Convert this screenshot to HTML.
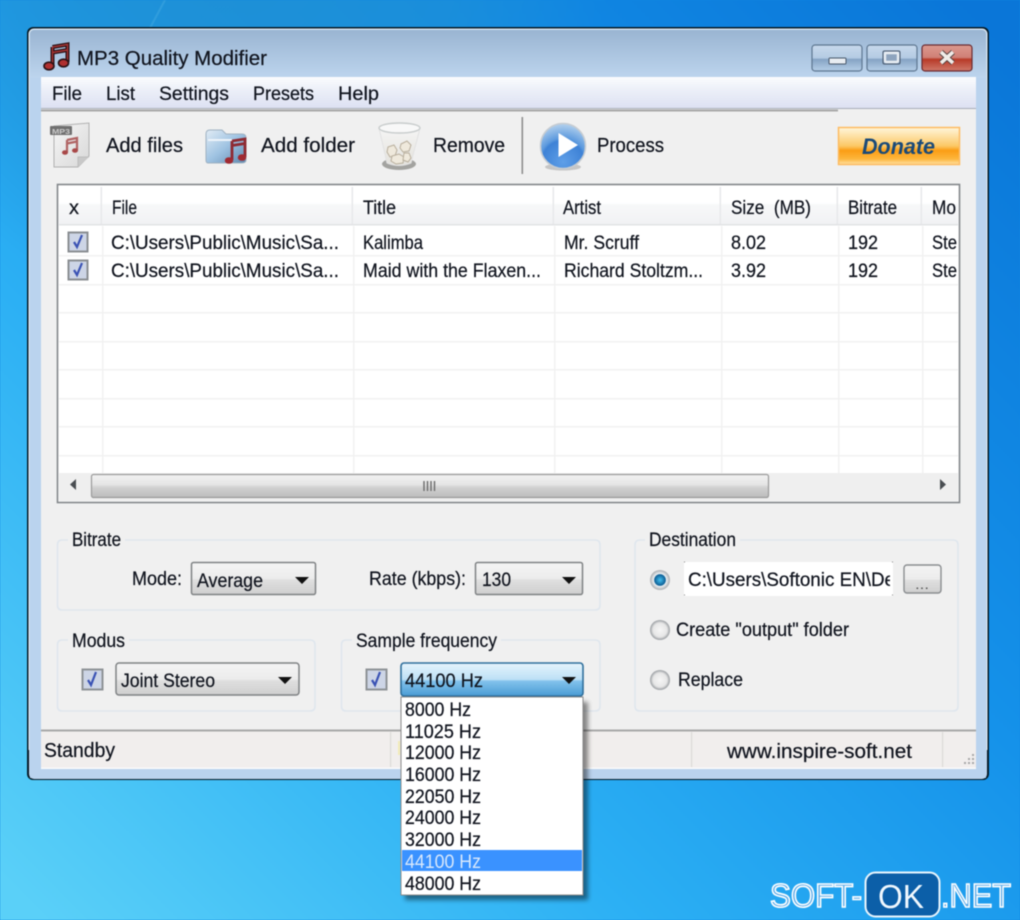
<!DOCTYPE html>
<html><head><meta charset="utf-8"><title>MP3 Quality Modifier</title>
<style>
html,body{margin:0;padding:0;width:1020px;height:920px;overflow:hidden;background:#1088e0}
svg{display:block;position:absolute;left:0;top:0;filter:blur(0.55px)}
text{font-family:"Liberation Sans",sans-serif;font-size:19px;fill:#10141e;stroke:#10141e;stroke-width:.22px}
</style></head><body>
<svg width="1020" height="920" viewBox="0 0 1020 920" xmlns="http://www.w3.org/2000/svg">
<defs>
<linearGradient id="bg" x1="0" y1=".95" x2="1" y2=".05"><stop offset="0" stop-color="#5ad0f8"/><stop offset=".32" stop-color="#2cb0f4"/><stop offset=".62" stop-color="#1592ea"/><stop offset="1" stop-color="#0a76d8"/></linearGradient>
<radialGradient id="bgtl" gradientUnits="userSpaceOnUse" cx="230" cy="-60" r="380"><stop offset="0" stop-color="#1f90d4" stop-opacity=".95"/><stop offset=".6" stop-color="#1f90d4" stop-opacity=".6"/><stop offset="1" stop-color="#1f90d4" stop-opacity="0"/></radialGradient>
<linearGradient id="title" x1="0" y1="0" x2="0" y2="1"><stop offset="0" stop-color="#9ab5d2"/><stop offset="1" stop-color="#bdd5ee"/></linearGradient>
<linearGradient id="menu" x1="0" y1="0" x2="0" y2="1"><stop offset="0" stop-color="#fbfcfe"/><stop offset=".35" stop-color="#eef1f9"/><stop offset="1" stop-color="#dde1f2"/></linearGradient>
<linearGradient id="hdr" x1="0" y1="0" x2="0" y2="1"><stop offset="0" stop-color="#fff"/><stop offset=".45" stop-color="#fff"/><stop offset=".5" stop-color="#f7f8f9"/><stop offset="1" stop-color="#f1f2f4"/></linearGradient>
<linearGradient id="combo" x1="0" y1="0" x2="0" y2="1"><stop offset="0" stop-color="#f4f4f4"/><stop offset=".5" stop-color="#ececec"/><stop offset=".55" stop-color="#dfdfdf"/><stop offset="1" stop-color="#cfcfcf"/></linearGradient>
<linearGradient id="comboh" x1="0" y1="0" x2="0" y2="1"><stop offset="0" stop-color="#e6f4fc"/><stop offset=".5" stop-color="#bde0f6"/><stop offset=".55" stop-color="#82c2ec"/><stop offset="1" stop-color="#4a9cd4"/></linearGradient>
<linearGradient id="thumb" x1="0" y1="0" x2="0" y2="1"><stop offset="0" stop-color="#f3f3f3"/><stop offset=".45" stop-color="#e4e4e4"/><stop offset=".55" stop-color="#d2d2d2"/><stop offset="1" stop-color="#bcbcbc"/></linearGradient>
<linearGradient id="wbtn" x1="0" y1="0" x2="0" y2="1"><stop offset="0" stop-color="#c8d9ec"/><stop offset=".5" stop-color="#b4cbe3"/><stop offset=".55" stop-color="#85a3c4"/><stop offset="1" stop-color="#b6cfe8"/></linearGradient>
<linearGradient id="wclose" x1="0" y1="0" x2="0" y2="1"><stop offset="0" stop-color="#dc9a90"/><stop offset=".48" stop-color="#d08076"/><stop offset=".55" stop-color="#b83a28"/><stop offset="1" stop-color="#d0796a"/></linearGradient>
<linearGradient id="don" x1="0" y1="0" x2="0" y2="1"><stop offset="0" stop-color="#fff6dc"/><stop offset=".5" stop-color="#fcc865"/><stop offset=".62" stop-color="#fb9d14"/><stop offset=".85" stop-color="#fdb63c"/><stop offset="1" stop-color="#ffe2a8"/></linearGradient>
<linearGradient id="page" x1="0" y1="0" x2="1" y2="1"><stop offset="0" stop-color="#f6f6f6"/><stop offset="1" stop-color="#d8d8d8"/></linearGradient>
<linearGradient id="fold" x1="0" y1="0" x2="1" y2="1"><stop offset="0" stop-color="#e2ecf5"/><stop offset=".5" stop-color="#9fc3e2"/><stop offset="1" stop-color="#5f88ae"/></linearGradient>
<linearGradient id="bin" x1="0" y1="0" x2="0" y2="1"><stop offset="0" stop-color="#f5f5f5"/><stop offset="1" stop-color="#e4e2dc"/></linearGradient>
<radialGradient id="ball" cx=".5" cy=".85" r=".85"><stop offset="0" stop-color="#5f9fe8"/><stop offset=".55" stop-color="#3e82d6"/><stop offset=".62" stop-color="#5d9ade"/><stop offset="1" stop-color="#b5d2ee"/></radialGradient>
<radialGradient id="rad" cx=".5" cy=".5" r=".5"><stop offset="0" stop-color="#44c0f0"/><stop offset=".55" stop-color="#0c5f96"/><stop offset=".62" stop-color="#eef2f5"/><stop offset="1" stop-color="#a8acb0"/></radialGradient>
<radialGradient id="rad0" cx=".5" cy=".5" r=".5"><stop offset="0" stop-color="#f6f6f6"/><stop offset=".7" stop-color="#e6e6e6"/><stop offset="1" stop-color="#989ca0"/></radialGradient>
<filter id="sh" x="-10%" y="-10%" width="125%" height="125%"><feGaussianBlur stdDeviation="2.5"/></filter>
<clipPath id="cl2"><rect x="685" y="565" width="205" height="30"/></clipPath>
</defs>

<!-- desktop -->
<rect width="1020" height="920" fill="url(#bg)"/>
<rect width="1020" height="400" fill="url(#bgtl)"/>
<path d="M165 0 L150 28" stroke="#5ab8e6" stroke-width="2" opacity=".3"/>

<!-- window -->
<rect x="27" y="27" width="962" height="753" rx="6" fill="#061a26"/>
<rect x="29" y="29" width="958" height="750" rx="5" fill="#bcd4ee"/>
<path d="M29 750V34a5 5 0 0 1 5-5H982a5 5 0 0 1 5 5V750" fill="none" stroke="#e4eef6" stroke-width="1"/>
<rect x="30" y="30" width="956" height="48" rx="4" fill="url(#title)"/>
<rect x="30" y="78" width="11" height="700" fill="#bad3ee"/>
<rect x="976" y="78" width="10" height="700" fill="#bad3ee"/>
<rect x="38" y="768" width="940" height="10" fill="#bad3ee"/>

<!-- title icon -->
<g fill="none" stroke="#2a1216">
<path d="M52.5 47 L67.5 44.5 V62" stroke-width="4"/>
<path d="M52.5 47 V66" stroke-width="4"/>
<path d="M52.5 52.5 L67.5 50" stroke-width="4"/>
</g>
<g fill="none" stroke="#a83434">
<path d="M52.5 47 L67.5 44.5 V62" stroke-width="1.4"/>
<path d="M52.5 47 V65" stroke-width="1.4"/>
<path d="M52.5 52.5 L67.5 50" stroke-width="1.4"/>
</g>
<ellipse cx="49" cy="66" rx="5" ry="3.8" fill="#b03030" stroke="#2a1216" stroke-width="1.6"/>
<ellipse cx="63.5" cy="63" rx="5" ry="3.8" fill="#b03030" stroke="#2a1216" stroke-width="1.6"/>
<text x="77" y="65" textLength="190" lengthAdjust="spacingAndGlyphs" style="font-size:20px">MP3 Quality Modifier</text>

<!-- window buttons -->
<rect x="812" y="45" width="50" height="26" rx="3" fill="url(#wbtn)" stroke="#5d7690" stroke-width="1.2"/>
<rect x="829" y="58" width="17" height="6" rx="1" fill="#e8edf2" stroke="#47566a"/>
<rect x="867" y="45" width="50" height="26" rx="3" fill="url(#wbtn)" stroke="#5d7690" stroke-width="1.2"/>
<rect x="885" y="53" width="13" height="9" rx="1" fill="#8ea4be" stroke="#e8edf2" stroke-width="2.4"/>
<rect x="883" y="51" width="17" height="13" rx="1.5" fill="none" stroke="#47566a"/>
<rect x="922" y="45" width="50" height="26" rx="3" fill="url(#wclose)" stroke="#6a2a30" stroke-width="1.2"/>
<path d="M941 52 L953 63 M953 52 L941 63" stroke="#4a3a3a" stroke-width="5.4"/>
<path d="M941 52 L953 63 M953 52 L941 63" stroke="#f0ece8" stroke-width="3.6"/>

<!-- client -->
<rect x="41" y="77" width="935" height="692" fill="#f0f0f0"/>
<rect x="41" y="77" width="935" height="31" fill="url(#menu)"/>
<rect x="41" y="108" width="935" height="1" fill="#a9aeb8"/>
<rect x="41" y="109.5" width="797" height="2" fill="#a8a8a8"/>

<text x="52" y="100" textLength="30" lengthAdjust="spacingAndGlyphs">File</text>
<text x="106" y="100" textLength="29" lengthAdjust="spacingAndGlyphs">List</text>
<text x="159" y="100" textLength="70" lengthAdjust="spacingAndGlyphs">Settings</text>
<text x="253" y="100" textLength="61" lengthAdjust="spacingAndGlyphs">Presets</text>
<text x="338" y="100" textLength="41" lengthAdjust="spacingAndGlyphs">Help</text>

<!-- toolbar icons -->
<path d="M54 126 L89 123 V156 L78 167 H54 Z" fill="url(#page)" stroke="#b0b0b0"/>
<path d="M78 167 V157 H89" fill="#c8c8c8" stroke="#bcbcbc"/>
<rect x="50" y="126" width="22" height="9" rx="1" fill="#707070"/>
<text x="52" y="134" textLength="18" lengthAdjust="spacingAndGlyphs" style="font-size:7px;font-weight:bold;fill:#ccc;stroke:none">MP3</text>
<path d="M67 140 L77 138 V150 M67 140 V152 M67 143.5 L77 141.5" fill="none" stroke="#b06464" stroke-width="2.2"/>
<ellipse cx="65" cy="152.5" rx="3" ry="2.3" fill="#a84848"/><ellipse cx="75" cy="150.5" rx="3" ry="2.3" fill="#a84848"/>
<text x="106" y="152" textLength="77" lengthAdjust="spacingAndGlyphs" style="font-size:20px">Add files</text>

<path d="M206 134 Q206 130 210 130 H222 L226 134 H242 Q246 134 246 138 V160 Q246 163 242 163 H208 Q206 163 206 160 Z" fill="url(#fold)" stroke="#9fb2c2"/>
<path d="M208 140 H232" stroke="#eef4fa" stroke-width="2"/>
<path d="M232 141 L245 139 V157 M232 141 V160 M232 145.5 L245 143.5" fill="none" stroke="#8e2a32" stroke-width="2.8"/>
<ellipse cx="229" cy="160.5" rx="4.2" ry="3.3" fill="#a02a32"/><ellipse cx="242" cy="157.5" rx="4.2" ry="3.3" fill="#a02a32"/>
<text x="261" y="152" textLength="94" lengthAdjust="spacingAndGlyphs" style="font-size:20px">Add folder</text>

<ellipse cx="399" cy="164" rx="17" ry="6" fill="#8a8a86" opacity=".75"/>
<path d="M379 128 L387 163 Q399 168 411 163 L420 128 Z" fill="url(#bin)" stroke="#e2e2e2"/>
<ellipse cx="399.5" cy="128" rx="20.5" ry="5" fill="#f8f8f8" stroke="#c8cccc" stroke-width="1.4"/>
<g fill="#efe9dc" stroke="#b8ae9c" stroke-width="1">
<path d="M388 147 l6 -2 l3 5 l-2 6 l-5 1 l-3 -5 Z"/>
<path d="M401 144 l6 -3 l4 4 l-2 6 l-6 1 l-3 -4 Z"/>
<path d="M392 156 l7 -2 l5 3 l-1 6 l-7 1 l-5 -3 Z"/>
<path d="M404 153 l5 0 l2 5 l-3 4 l-5 -2 Z"/>
</g>
<text x="433" y="152" textLength="72" lengthAdjust="spacingAndGlyphs" style="font-size:20px">Remove</text>

<rect x="521.5" y="117" width="1.6" height="57" fill="#8e8e8e"/>
<ellipse cx="563" cy="167" rx="18" ry="3.5" fill="#aaa" opacity=".6"/>
<circle cx="563" cy="146" r="22.5" fill="url(#ball)" stroke="#c6ccd2" stroke-width="1.5"/>
<path d="M558.5 133 L558.5 157 L578 145 Z" fill="#fff"/>
<text x="597" y="152" textLength="67" lengthAdjust="spacingAndGlyphs" style="font-size:20px">Process</text>

<rect x="838.5" y="127.5" width="121" height="37" fill="url(#don)" stroke="#fdbb62" stroke-width="1.5"/>
<text x="862" y="154" textLength="73" lengthAdjust="spacingAndGlyphs" style="font-size:22px;font-weight:bold;font-style:italic;fill:#1a4a78;stroke:none">Donate</text>

<!-- list -->
<rect x="57.5" y="184.5" width="902" height="318" fill="#fff" stroke="#83878b" stroke-width="1.6"/>
<rect x="59" y="186" width="899" height="38" fill="url(#hdr)"/>
<rect x="59" y="224" width="899" height="1.5" fill="#e2e3e5"/>
<g fill="#e8e9eb">
<rect x="100.5" y="187" width="1.6" height="37"/><rect x="351.5" y="187" width="1.6" height="37"/><rect x="552.5" y="187" width="1.6" height="37"/><rect x="719.5" y="187" width="1.6" height="37"/><rect x="836.5" y="187" width="1.6" height="37"/><rect x="920.5" y="187" width="1.6" height="37"/>
</g>
<g fill="#f1f1f1">
<rect x="102" y="226" width="1.4" height="247"/><rect x="353" y="226" width="1.4" height="247"/><rect x="554" y="226" width="1.4" height="247"/><rect x="721" y="226" width="1.4" height="247"/><rect x="838" y="226" width="1.4" height="247"/><rect x="922" y="226" width="1.4" height="247"/>
<rect x="59" y="255" width="899" height="1.4"/><rect x="59" y="284" width="899" height="1.4"/><rect x="59" y="312" width="899" height="1.4"/><rect x="59" y="341" width="899" height="1.4"/><rect x="59" y="369" width="899" height="1.4"/><rect x="59" y="398" width="899" height="1.4"/><rect x="59" y="426" width="899" height="1.4"/><rect x="59" y="455" width="899" height="1.4"/>
</g>
<text x="69" y="214" textLength="10" lengthAdjust="spacingAndGlyphs">x</text>
<text x="112" y="214" textLength="25" lengthAdjust="spacingAndGlyphs">File</text>
<text x="363" y="214" textLength="33" lengthAdjust="spacingAndGlyphs">Title</text>
<text x="563" y="214" textLength="38" lengthAdjust="spacingAndGlyphs">Artist</text>
<text x="731" y="214" textLength="80" lengthAdjust="spacingAndGlyphs" xml:space="preserve">Size  (MB)</text>
<text x="848" y="214" textLength="49" lengthAdjust="spacingAndGlyphs">Bitrate</text>
<text x="932" y="214" textLength="24" lengthAdjust="spacingAndGlyphs">Mo</text>

<g>
<rect x="68.5" y="232.5" width="19" height="19" fill="#cdd5e6" stroke="#8a8e92" stroke-width="2"/>
<path d="M74 242 L77 247 L82 235" fill="none" stroke="#3a52b4" stroke-width="2.2"/>
<rect x="68.5" y="260.5" width="19" height="19" fill="#cdd5e6" stroke="#8a8e92" stroke-width="2"/>
<path d="M74 270 L77 275 L82 263" fill="none" stroke="#3a52b4" stroke-width="2.2"/>
</g>
<text x="111" y="249" textLength="228" lengthAdjust="spacingAndGlyphs">C:\Users\Public\Music\Sa...</text>
<text x="363" y="249" textLength="60" lengthAdjust="spacingAndGlyphs">Kalimba</text>
<text x="564" y="249" textLength="75" lengthAdjust="spacingAndGlyphs">Mr. Scruff</text>
<text x="731" y="249" textLength="35" lengthAdjust="spacingAndGlyphs">8.02</text>
<text x="848" y="249" textLength="30" lengthAdjust="spacingAndGlyphs">192</text>
<text x="932" y="249" textLength="25" lengthAdjust="spacingAndGlyphs">Ste</text>
<text x="111" y="277" textLength="228" lengthAdjust="spacingAndGlyphs">C:\Users\Public\Music\Sa...</text>
<text x="363" y="277" textLength="178" lengthAdjust="spacingAndGlyphs">Maid with the Flaxen...</text>
<text x="564" y="277" textLength="139" lengthAdjust="spacingAndGlyphs">Richard Stoltzm...</text>
<text x="731" y="277" textLength="35" lengthAdjust="spacingAndGlyphs">3.92</text>
<text x="848" y="277" textLength="30" lengthAdjust="spacingAndGlyphs">192</text>
<text x="932" y="277" textLength="25" lengthAdjust="spacingAndGlyphs">Ste</text>

<!-- scrollbar -->
<rect x="59" y="473" width="899" height="28" fill="#efefef"/>
<path d="M76 479 V490 L70 484.5 Z" fill="#4a4e52"/>
<path d="M940 479 V490 L946 484.5 Z" fill="#4a4e52"/>
<rect x="91.5" y="474.5" width="677" height="23" rx="2" fill="url(#thumb)" stroke="#9a9a9a" stroke-width="1.2"/>
<path d="M424 481V491M427.5 481V491M431 481V491M434.5 481V491" stroke="#6a6a6a" stroke-width="1.4"/>

<!-- groups -->
<g fill="none" stroke="#dfe6ee" stroke-width="1.6">
<path d="M68 540 H62 Q57.5 540 57.5 545 V605 Q57.5 610 62 610 H595 Q600 610 600 605 V545 Q600 540 595 540 H125"/>
<path d="M68 640 H62 Q57.5 640 57.5 645 V706 Q57.5 711 62 711 H310 Q315 711 315 706 V645 Q315 640 310 640 H129"/>
<path d="M352 640 H346 Q341.5 640 341.5 645 V706 Q341.5 711 346 711 H595 Q600 711 600 706 V645 Q600 640 595 640 H501"/>
<path d="M645 540 H640 Q635 540 635 545 V706 Q635 711 640 711 H953 Q958 711 958 706 V545 Q958 540 953 540 H740"/>
</g>
<text x="72" y="546" textLength="49" lengthAdjust="spacingAndGlyphs">Bitrate</text>
<text x="132" y="585" textLength="50" lengthAdjust="spacingAndGlyphs">Mode:</text>
<rect x="191.5" y="562.5" width="124" height="32" rx="2" fill="url(#combo)" stroke="#7f8284" stroke-width="1.5"/>
<text x="197" y="587" textLength="66" lengthAdjust="spacingAndGlyphs">Average</text>
<path d="M295 577 H309 L302 584 Z" fill="#111"/>
<text x="369" y="585" textLength="97" lengthAdjust="spacingAndGlyphs">Rate (kbps):</text>
<rect x="475.5" y="562.5" width="107" height="32" rx="2" fill="url(#combo)" stroke="#7f8284" stroke-width="1.5"/>
<text x="482" y="586" textLength="29" lengthAdjust="spacingAndGlyphs">130</text>
<path d="M562 577 H576 L569 584 Z" fill="#111"/>

<text x="72" y="647" textLength="53" lengthAdjust="spacingAndGlyphs">Modus</text>
<rect x="82.5" y="669.5" width="20" height="20" fill="#cdd5e6" stroke="#8e9296" stroke-width="2"/>
<path d="M88 680 L91 685 L96 672" fill="none" stroke="#3a52b4" stroke-width="2.2"/>
<rect x="116" y="663" width="183" height="32" rx="3" fill="url(#combo)" stroke="#7f8284" stroke-width="1.5"/>
<text x="121" y="687" textLength="94" lengthAdjust="spacingAndGlyphs">Joint Stereo</text>
<path d="M278 677 H292 L285 684 Z" fill="#111"/>

<text x="356" y="647" textLength="141" lengthAdjust="spacingAndGlyphs">Sample frequency</text>
<rect x="366.5" y="669.5" width="20" height="20" fill="#cdd5e6" stroke="#8e9296" stroke-width="2"/>
<path d="M372 680 L375 685 L380 672" fill="none" stroke="#3a52b4" stroke-width="2.2"/>
<rect x="401" y="663" width="182" height="33" rx="3" fill="url(#comboh)" stroke="#2f6f9c" stroke-width="1.6"/>
<text x="405" y="687" textLength="78" lengthAdjust="spacingAndGlyphs">44100 Hz</text>
<path d="M562 677 H576 L569 684 Z" fill="#111"/>

<!-- destination -->
<text x="649" y="546" textLength="87" lengthAdjust="spacingAndGlyphs">Destination</text>
<circle cx="660" cy="580" r="10" fill="url(#rad)"/>
<rect x="684" y="562" width="209" height="34" fill="#fff"/>
<g clip-path="url(#cl2)"><text x="688" y="586" textLength="207" lengthAdjust="spacingAndGlyphs">C:\Users\Softonic EN\De</text></g>
<path d="M684 562h1M892 562h1M684 595h1M892 595h1" stroke="#888"/>
<rect x="904" y="565" width="37" height="28" rx="3" fill="url(#combo)" stroke="#8a8d90" stroke-width="1.4"/>
<text x="915" y="589" textLength="14" lengthAdjust="spacingAndGlyphs" style="font-size:14px;stroke:none;fill:#555">...</text>
<circle cx="660" cy="630" r="10" fill="url(#rad0)"/>
<text x="676" y="636" textLength="173" lengthAdjust="spacingAndGlyphs">Create "output" folder</text>
<circle cx="660" cy="680" r="10" fill="url(#rad0)"/>
<text x="678" y="686" textLength="65" lengthAdjust="spacingAndGlyphs">Replace</text>

<!-- status -->
<rect x="41" y="729.5" width="935" height="2" fill="#a8a8a8"/>
<rect x="41" y="731.5" width="935" height="36" fill="#f1eeed"/>
<rect x="41" y="767.5" width="935" height="1.5" fill="#fbfbfb"/>
<rect x="390" y="732" width="1.2" height="35" fill="#dcdad8"/>
<rect x="398" y="741" width="2" height="14" fill="#f2ecb8"/>
<rect x="691" y="732" width="1.2" height="35" fill="#dcdad8"/>
<rect x="942" y="732" width="1.2" height="35" fill="#dcdad8"/>
<text x="44" y="757" textLength="71" lengthAdjust="spacingAndGlyphs" style="font-size:20px">Standby</text>
<text x="727" y="758" textLength="185" lengthAdjust="spacingAndGlyphs" style="font-size:20px">www.inspire-soft.net</text>
<path d="M972 754h2v2h-2zM968 758h2v2h-2zM972 758h2v2h-2zM964 762h2v2h-2zM968 762h2v2h-2zM972 762h2v2h-2z" fill="#a8a8a8"/>

<!-- dropdown -->
<rect x="405" y="702" width="183" height="198" fill="#000" opacity=".45" filter="url(#sh)"/>
<rect x="401" y="697" width="182" height="198" fill="#fff" stroke="#8a8a8a" stroke-width="1"/>
<rect x="402" y="850" width="180" height="21" fill="#3a92ff"/>
<text x="405" y="716" textLength="66" lengthAdjust="spacingAndGlyphs">8000 Hz</text>
<text x="405" y="738" textLength="76" lengthAdjust="spacingAndGlyphs">11025 Hz</text>
<text x="405" y="759" textLength="76" lengthAdjust="spacingAndGlyphs">12000 Hz</text>
<text x="405" y="781" textLength="76" lengthAdjust="spacingAndGlyphs">16000 Hz</text>
<text x="405" y="803" textLength="76" lengthAdjust="spacingAndGlyphs">22050 Hz</text>
<text x="405" y="824" textLength="76" lengthAdjust="spacingAndGlyphs">24000 Hz</text>
<text x="405" y="846" textLength="76" lengthAdjust="spacingAndGlyphs">32000 Hz</text>
<text x="405" y="868" textLength="76" lengthAdjust="spacingAndGlyphs" style="fill:#d8e8fc;stroke:none">44100 Hz</text>
<text x="405" y="890" textLength="76" lengthAdjust="spacingAndGlyphs">48000 Hz</text>

<!-- watermark -->
<text x="770" y="907" textLength="92" lengthAdjust="spacingAndGlyphs" style="font-size:33px;fill:#5aaae8;stroke:#fff;stroke-width:1.6px">SOFT-</text>
<rect x="865.5" y="872.5" width="74" height="44" rx="10" fill="#0c5fa8" stroke="#e8f4fc" stroke-width="2"/>
<text x="878" y="908" textLength="46" lengthAdjust="spacingAndGlyphs" style="font-size:33px;fill:#f0f8fe;stroke:none">OK</text>
<text x="941" y="907" textLength="70" lengthAdjust="spacingAndGlyphs" style="font-size:33px;fill:#5aaae8;stroke:#fff;stroke-width:1.6px">.NET</text>
</svg>
</body></html>
